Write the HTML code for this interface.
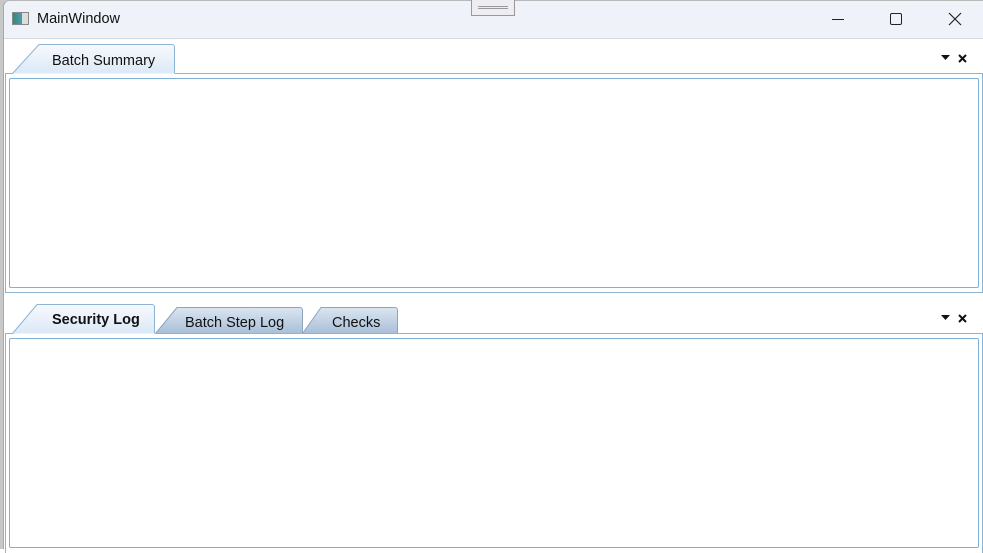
<!DOCTYPE html>
<html><head><meta charset="utf-8"><style>
*{margin:0;padding:0;box-sizing:border-box}
body{width:983px;height:549px;overflow:hidden;background:#fff;font-family:"Liberation Sans",sans-serif;position:relative}
.abs{position:absolute}
.t{font-size:14.5px;color:#111}
</style></head><body>
<div class="abs" style="left:0;top:0;width:983px;height:549px;background:#c8c8c8"></div>
<div class="abs" style="left:3px;top:0;width:980px;height:549px;background:#fff;border-top-left-radius:7px;border-left:1px solid #a8a8a8;border-top:1px solid #b8b8b8"></div>
<div class="abs" style="left:4px;top:1px;width:979px;height:38px;background:#eff3f9;border-top-left-radius:7px;border-bottom:1px solid #d6dbe2"></div>
<div class="abs" style="left:12px;top:12px;width:17px;height:13px;border:1px solid #888;background:linear-gradient(90deg,#3a8a6a 0,#4a9abf 60%,#ddd 60%)"></div>
<div class="abs t" style="left:37px;top:11px">MainWindow</div>
<div class="abs" style="left:471px;top:0;width:44px;height:16px;border:1px solid #999;border-top:none;background:#eeeef2"></div>
<div class="abs" style="left:478px;top:6px;width:30px;height:3px;border-top:1px solid #999;border-bottom:1px solid #999"></div>
<div class="abs" style="left:832px;top:19px;width:12px;height:1px;background:#222"></div>
<div class="abs" style="left:890px;top:13px;width:12px;height:12px;border:1.3px solid #222;border-radius:2px"></div>
<svg class="abs" style="left:948px;top:12px" width="14" height="14"><path d="M1 1L13 13M13 1L1 13" stroke="#222" stroke-width="1.2"/></svg>

<svg class="abs" style="left:0;top:40px" width="983" height="40">
<defs><linearGradient id="g1" x1="0" y1="0" x2="0" y2="1"><stop offset="0" stop-color="#f6f9fd"/><stop offset="1" stop-color="#dce9f7"/></linearGradient>
<linearGradient id="g2" x1="0" y1="0" x2="0" y2="1"><stop offset="0" stop-color="#dbe5f0"/><stop offset="1" stop-color="#a9bfd8"/></linearGradient></defs>
<path d="M12.5 33.5L39 4.5H172a2.5 2.5 0 0 1 2.5 2.5V33.5" fill="url(#g1)" stroke="#8cb4d4"/>
</svg>
<div class="abs t" style="left:52px;top:53px">Batch Summary</div>
<div class="abs" style="left:5px;top:73px;width:978px;height:220px;border:1px solid #8cb4d4;border-top:none"></div>
<div class="abs" style="left:175px;top:73px;width:808px;height:1px;background:#8cb4d4"></div>
<div class="abs" style="left:5px;top:73px;width:8px;height:1px;background:#8cb4d4"></div>
<div class="abs" style="left:9px;top:78px;width:970px;height:210px;border:1px solid #7fb0d6;border-radius:2px"></div>
<svg class="abs" style="left:940px;top:53px" width="30" height="12"><path d="M1 2H10L5.5 7Z" fill="#111"/><path d="M19 2L26 9M26 2L19 9" stroke="#111" stroke-width="2"/></svg>

<svg class="abs" style="left:0;top:300px" width="420" height="36">
<path d="M155.5 33.5L177 7.5H300a2.5 2.5 0 0 1 2.5 2.5V33.5" fill="url(#g2)" stroke="#8ea4bd"/>
<path d="M302.5 33.5L321 7.5H395a2.5 2.5 0 0 1 2.5 2.5V33.5" fill="url(#g2)" stroke="#8ea4bd"/>
<path d="M12.5 33.5L37 4.5H152a2.5 2.5 0 0 1 2.5 2.5V33.5" fill="url(#g1)" stroke="#8cb4d4"/>
</svg>
<div class="abs t" style="left:52px;top:312px;font-weight:bold">Security Log</div>
<div class="abs t" style="left:185px;top:315px">Batch Step Log</div>
<div class="abs t" style="left:332px;top:315px">Checks</div>
<div class="abs" style="left:5px;top:333px;width:978px;height:220px;border-left:1px solid #8cb4d4;border-right:1px solid #8cb4d4"></div>
<div class="abs" style="left:155px;top:333px;width:828px;height:1px;background:#8cb4d4"></div>
<div class="abs" style="left:5px;top:333px;width:8px;height:1px;background:#8cb4d4"></div>
<div class="abs" style="left:9px;top:338px;width:970px;height:210px;border:1px solid #7fb0d6;border-radius:2px"></div>
<svg class="abs" style="left:940px;top:313px" width="30" height="12"><path d="M1 2H10L5.5 7Z" fill="#111"/><path d="M19 2L26 9M26 2L19 9" stroke="#111" stroke-width="2"/></svg>
</body></html>
